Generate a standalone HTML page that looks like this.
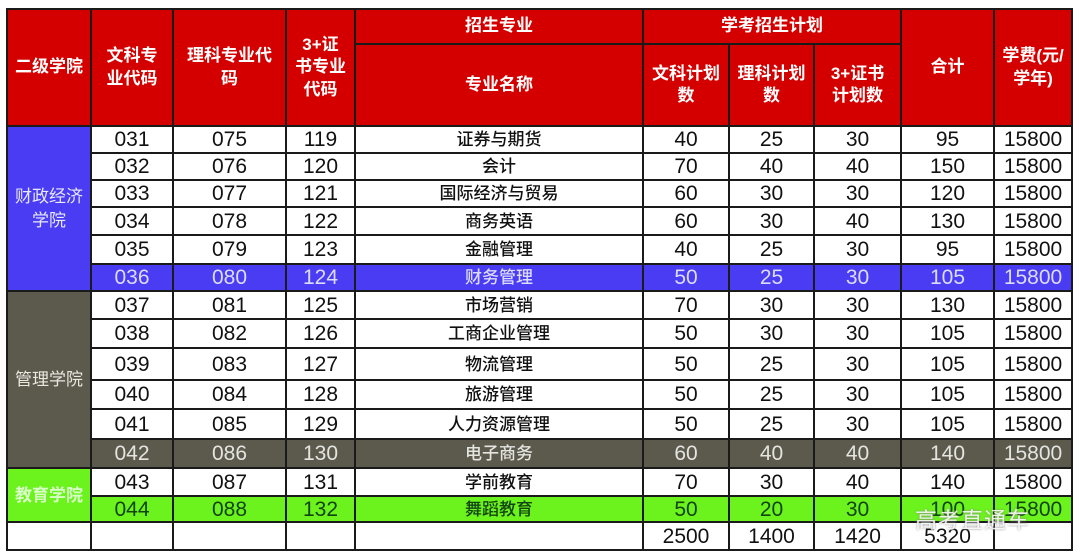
<!DOCTYPE html>
<html><head><meta charset="utf-8"><style>
body{margin:0;background:#fff;width:1080px;height:559px;overflow:hidden;position:relative;font-family:"Liberation Sans","Noto Sans CJK SC",sans-serif}
table{position:absolute;left:6px;top:8px;border-collapse:collapse;table-layout:fixed;width:1065px}
td{border:2px solid #1a1a1a;text-align:center;padding:0;font-size:21px;color:#111;line-height:1}
.h td,td.h{background:#d40000;color:#fff;font-size:17px;font-weight:bold;line-height:1.3}
td.zh{font-size:17px;font-weight:500}
.b td{background:#4a3cf2;color:#dcdcff}
.g td{background:#5c594d;color:#e4e4e0}
.gr td{background:#6cf21c;color:#124412}
td.lb{background:#4a3cf2;color:#e8e8ff;font-size:17px;line-height:1.4}
td.lg{background:#5c594d;color:#e8e8e0;font-size:17px}
td.lgr{background:#6cf21c;color:#d8ffc8;font-size:17px;font-weight:bold}
.wm{position:absolute;left:915px;top:503px;font-size:22px;color:rgba(255,255,255,.85);text-shadow:0 0 2px #888;letter-spacing:1px}
</style></head><body>
<table>
<colgroup><col style="width:84px"><col style="width:82px"><col style="width:113px"><col style="width:69px"><col style="width:288px"><col style="width:86px"><col style="width:85px"><col style="width:87px"><col style="width:93px"><col style="width:78px"></colgroup>
<tr class="h" style="height:35px"><td rowspan="2">二级学院</td><td rowspan="2">文科专<br>业代码</td><td rowspan="2">理科专业代<br>码</td><td rowspan="2">3+证<br>书专业<br>代码</td><td>招生专业</td><td colspan="3">学考招生计划</td><td rowspan="2">合计</td><td rowspan="2">学费(元/<br>学年)</td></tr>
<tr class="h" style="height:82px"><td>专业名称</td><td>文科计划<br>数</td><td>理科计划<br>数</td><td>3+证书<br>计划数</td></tr>
<tr style="height:27px"><td rowspan="6" class="lb">财政经济<br>学院</td><td>031</td><td>075</td><td>119</td><td class="zh">证券与期货</td><td>40</td><td>25</td><td>30</td><td>95</td><td>15800</td></tr>
<tr style="height:27px"><td>032</td><td>076</td><td>120</td><td class="zh">会计</td><td>70</td><td>40</td><td>40</td><td>150</td><td>15800</td></tr>
<tr style="height:27px"><td>033</td><td>077</td><td>121</td><td class="zh">国际经济与贸易</td><td>60</td><td>30</td><td>30</td><td>120</td><td>15800</td></tr>
<tr style="height:28px"><td>034</td><td>078</td><td>122</td><td class="zh">商务英语</td><td>60</td><td>30</td><td>40</td><td>130</td><td>15800</td></tr>
<tr style="height:29px"><td>035</td><td>079</td><td>123</td><td class="zh">金融管理</td><td>40</td><td>25</td><td>30</td><td>95</td><td>15800</td></tr>
<tr class="b" style="height:27px"><td>036</td><td>080</td><td>124</td><td class="zh">财务管理</td><td>50</td><td>25</td><td>30</td><td>105</td><td>15800</td></tr>
<tr style="height:28px"><td rowspan="6" class="lg">管理学院</td><td>037</td><td>081</td><td>125</td><td class="zh">市场营销</td><td>70</td><td>30</td><td>30</td><td>130</td><td>15800</td></tr>
<tr style="height:29px"><td>038</td><td>082</td><td>126</td><td class="zh">工商企业管理</td><td>50</td><td>30</td><td>30</td><td>105</td><td>15800</td></tr>
<tr style="height:32px"><td>039</td><td>083</td><td>127</td><td class="zh">物流管理</td><td>50</td><td>25</td><td>30</td><td>105</td><td>15800</td></tr>
<tr style="height:29px"><td>040</td><td>084</td><td>128</td><td class="zh">旅游管理</td><td>50</td><td>25</td><td>30</td><td>105</td><td>15800</td></tr>
<tr style="height:30px"><td>041</td><td>085</td><td>129</td><td class="zh">人力资源管理</td><td>50</td><td>25</td><td>30</td><td>105</td><td>15800</td></tr>
<tr class="g" style="height:29px"><td>042</td><td>086</td><td>130</td><td class="zh">电子商务</td><td>60</td><td>40</td><td>40</td><td>140</td><td>15800</td></tr>
<tr style="height:28px"><td rowspan="2" class="lgr">教育学院</td><td>043</td><td>087</td><td>131</td><td class="zh">学前教育</td><td>70</td><td>30</td><td>40</td><td>140</td><td>15800</td></tr>
<tr class="gr" style="height:26px"><td>044</td><td>088</td><td>132</td><td class="zh">舞蹈教育</td><td>50</td><td>20</td><td>30</td><td>100</td><td>15800</td></tr>
<tr style="height:28px"><td></td><td></td><td></td><td></td><td></td><td>2500</td><td>1400</td><td>1420</td><td>5320</td><td></td></tr>
</table>
<div class="wm">高考直通车</div>
</body></html>
